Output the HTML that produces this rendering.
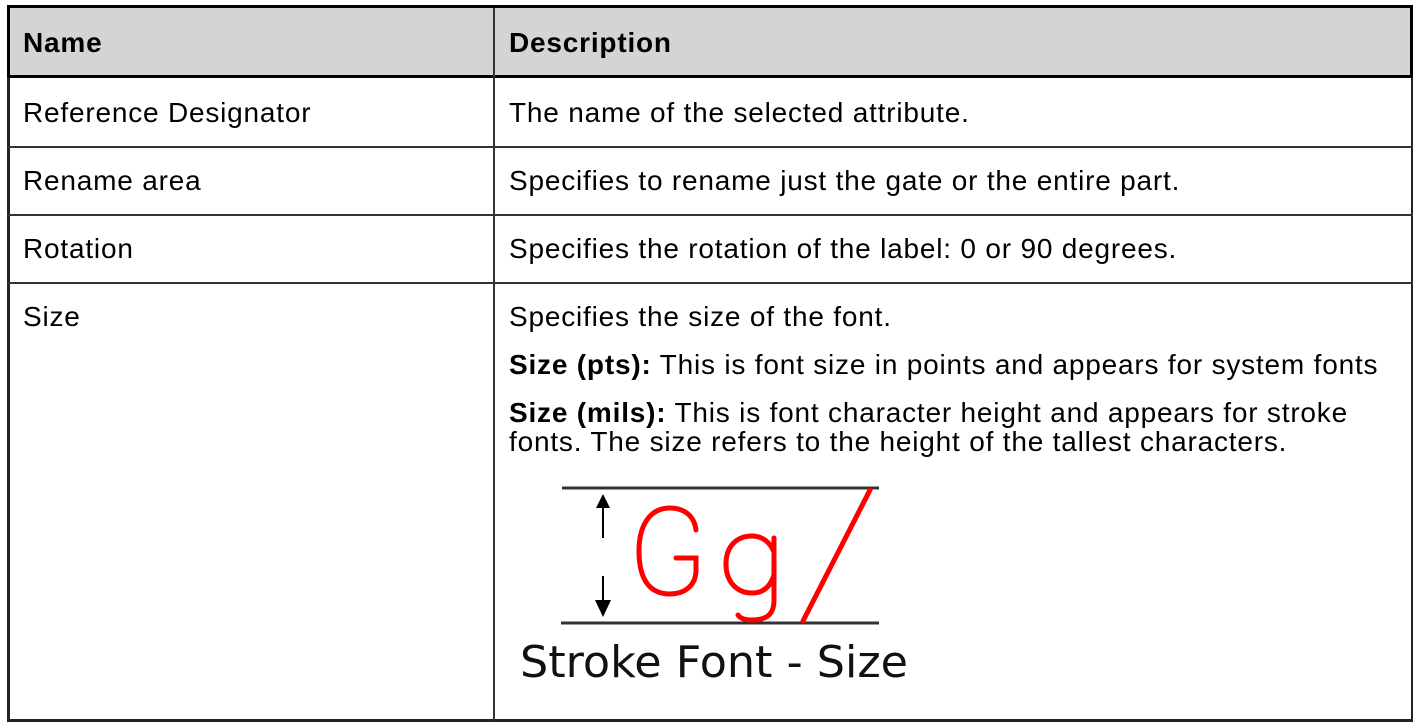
<!DOCTYPE html>
<html><head><style>
body{margin:0;width:1416px;height:723px;background:#fff;position:relative;overflow:hidden;font-family:"Liberation Sans",Arial,sans-serif;color:#000}
.a{position:absolute}
.t{position:absolute;font-size:28px;letter-spacing:0.8px;white-space:nowrap;line-height:30px}
</style></head><body>
<div class="a" style="left:7px;top:5px;width:1406px;height:73px;background:#d4d4d4;box-sizing:border-box;border:3px solid #000"></div>
<div class="a" style="left:7px;top:78px;width:3px;height:644px;background:#222"></div>
<div class="a" style="left:1411px;top:78px;width:2px;height:644px;background:#222"></div>
<div class="a" style="left:7px;top:719px;width:1406px;height:3px;background:#222"></div>
<div class="a" style="left:493px;top:8px;width:2px;height:713px;background:#333"></div>
<div class="a" style="left:7px;top:146px;width:1406px;height:2px;background:#333"></div>
<div class="a" style="left:7px;top:214px;width:1406px;height:2px;background:#333"></div>
<div class="a" style="left:7px;top:282px;width:1406px;height:2px;background:#333"></div>

<div class="t" style="left:23px;top:28px;font-weight:bold">Name</div>
<div class="t" style="left:509px;top:28px;font-weight:bold">Description</div>
<div class="t" style="left:23px;top:98px">Reference Designator</div>
<div class="t" style="left:509px;top:98px">The name of the selected attribute.</div>
<div class="t" style="left:23px;top:166px">Rename area</div>
<div class="t" style="left:509px;top:166px">Specifies to rename just the gate or the entire part.</div>
<div class="t" style="left:23px;top:234px">Rotation</div>
<div class="t" style="left:509px;top:234px">Specifies the rotation of the label: 0 or 90 degrees.</div>
<div class="t" style="left:23px;top:302px">Size</div>
<div class="t" style="left:509px;top:302px">Specifies the size of the font.</div>
<div class="t" style="left:509px;top:350px"><b>Size (pts):</b> This is font size in points and appears for system fonts</div>
<div class="t" style="left:509px;top:398px;line-height:29px"><b>Size (mils):</b> This is font character height and appears for stroke<br>fonts. The size refers to the height of the tallest characters.</div>

<svg class="a" style="left:0;top:0" width="1416" height="723">
<line x1="562" y1="488" x2="879" y2="488" stroke="#333" stroke-width="3"/>
<line x1="561" y1="623" x2="879" y2="623" stroke="#333" stroke-width="3"/>
<line x1="603" y1="500" x2="603" y2="538" stroke="#000" stroke-width="2"/>
<polygon points="596,508 610,508 603,494" fill="#000"/>
<line x1="603" y1="576" x2="603" y2="605" stroke="#000" stroke-width="2"/>
<polygon points="595,600 611,600 603,617" fill="#000"/>
<g fill="none" stroke="#f00" stroke-width="5" stroke-linecap="round">
<path d="M696,530 C694,514 682,508 670,508 C650,508 639,525 639,551 C639,580 650,594 670,594 C684,594 696,586 696,570 L696,558 L676,558"/>
<path d="M774,538 L774,600 C774,615 766,620 752,620 C744,620 740,618 738,615 M774,575 C770,588 762,593 752,593 C737,593 726,582 726,564 C726,546 737,536 752,536 C762,536 770,542 774,552"/>
<path d="M870,490 L803,621"/>
</g>
<text x="520" y="677" font-family="DejaVu Sans,sans-serif" font-size="44" fill="#111" textLength="388" lengthAdjust="spacingAndGlyphs">Stroke Font - Size</text>
</svg>
</body></html>
